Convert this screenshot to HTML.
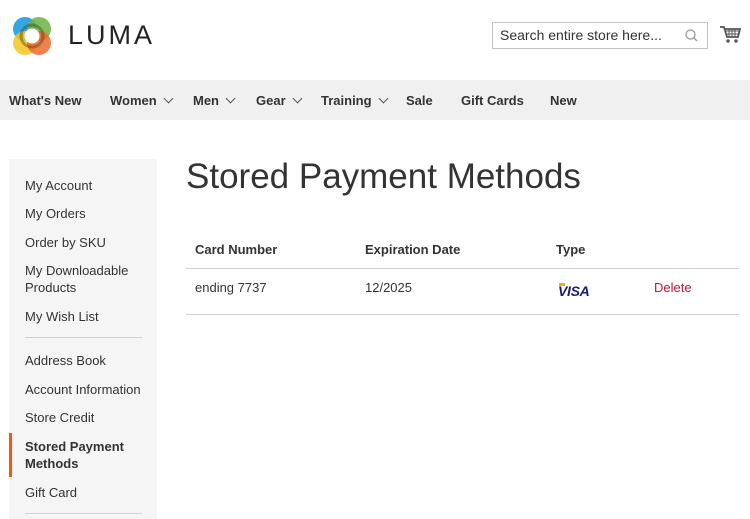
<!DOCTYPE html>
<html><head><style>
*{margin:0;padding:0;box-sizing:border-box}
body{width:750px;height:516px;overflow:hidden;background:#fff;font-family:"Liberation Sans",sans-serif;color:#333;position:relative}
.a{position:absolute;white-space:nowrap}
.nav{position:absolute;top:80px;left:0;width:750px;height:40px;background:#f0f0f0}
.nav span{position:absolute;top:13px;font-size:13px;font-weight:bold;color:#333}
.side{position:absolute;left:9px;top:159px;width:148px;height:360px;background:#f5f5f5}
.side div{position:absolute;left:16px;font-size:13px;color:#333;line-height:17px}
.chev{display:inline-block;width:7px;height:7px;border-right:1.5px solid #555;border-bottom:1.5px solid #555;transform:rotate(45deg);margin-left:8px;position:relative;top:-3px}
</style></head><body>
<svg class="a" style="left:8px;top:12px" width="48" height="48" viewBox="0 0 48 48">
<circle cx="17" cy="17" r="12" fill="#1e9ce0" opacity=".9"/>
<circle cx="31" cy="17" r="12" fill="#6cb33e" opacity=".85"/>
<circle cx="17" cy="31" r="12" fill="#f7c51e" opacity=".85"/>
<circle cx="31" cy="31" r="12" fill="#ef6a2a" opacity=".85"/>
<circle cx="24" cy="24" r="11" fill="none" stroke="#4a3a20" stroke-width="3" opacity=".4"/>
<circle cx="24" cy="24" r="7.5" fill="#fff"/>
</svg>
<div class="a" style="left:68px;top:20px;font-size:27px;letter-spacing:3px;color:#222">LUMA</div>
<div class="a" style="left:492px;top:22px;width:216px;height:27px;border:1px solid #c2c2c2"></div>
<div class="a" style="left:500px;top:27px;font-size:14px;color:#333">Search entire store here...</div>
<svg class="a" style="left:684px;top:28px" width="16" height="16"><circle cx="6.5" cy="6.5" r="4.5" fill="none" stroke="#999" stroke-width="1.3"/><line x1="10" y1="10" x2="13" y2="13" stroke="#999" stroke-width="1.3"/></svg>
<svg class="a" style="left:719px;top:24px" width="22" height="22" viewBox="0 0 22 22"><path d="M1 3h4l3 10h11l2-8H6" fill="none" stroke="#555" stroke-width="1.8"/><path d="M7 7h13M8 10h11M10 5v8M13 5v8M16 5v8" stroke="#555" stroke-width="1"/><circle cx="9" cy="17" r="1.7" fill="#555"/><circle cx="17" cy="17" r="1.7" fill="#555"/></svg>
<div class="nav">
<span style="left:9px">What's New</span>
<span style="left:110px">Women<i class="chev"></i></span>
<span style="left:193px">Men<i class="chev"></i></span>
<span style="left:256px">Gear<i class="chev"></i></span>
<span style="left:321px">Training<i class="chev"></i></span>
<span style="left:406px">Sale</span>
<span style="left:461px">Gift Cards</span>
<span style="left:550px">New</span>
</div>
<div class="side">
<div style="top:18px">My Account</div>
<div style="top:46px">My Orders</div>
<div style="top:75px">Order by SKU</div>
<div style="top:103px">My Downloadable<br>Products</div>
<div style="top:149px">My Wish List</div>
<div style="top:178px;left:16px;width:117px;height:1px;background:#d1d1d1"></div>
<div style="top:193px">Address Book</div>
<div style="top:222px">Account Information</div>
<div style="top:250px">Store Credit</div>
<div style="top:274px;left:0;width:3px;height:44px;background:#ff5501"></div>
<div style="top:279px;font-weight:bold">Stored Payment<br>Methods</div>
<div style="top:325px">Gift Card</div>
<div style="top:354px;left:16px;width:117px;height:1px;background:#d1d1d1"></div>
</div>
<div class="a" style="left:186px;top:157px;font-size:35px;font-weight:300;color:#333">Stored Payment Methods</div>
<div class="a" style="left:195px;top:242px;font-size:13px;font-weight:bold">Card Number</div>
<div class="a" style="left:365px;top:242px;font-size:13px;font-weight:bold">Expiration Date</div>
<div class="a" style="left:556px;top:242px;font-size:13px;font-weight:bold">Type</div>
<div class="a" style="left:186px;top:268px;width:553px;height:1px;background:#d1d1d1"></div>
<div class="a" style="left:195px;top:280px;font-size:13px">ending 7737</div>
<div class="a" style="left:365px;top:280px;font-size:13px">12/2025</div>
<div class="a" style="left:558px;top:283px;font-size:14px;font-weight:bold;font-style:italic;color:#1a1f71;letter-spacing:-.3px">VISA</div>
<div class="a" style="left:559px;top:283px;width:6px;height:3px;background:#f7a823"></div>
<div class="a" style="left:654px;top:280px;font-size:13px;color:#c0133a">Delete</div>
<div class="a" style="left:186px;top:314px;width:553px;height:1px;background:#d1d1d1"></div>
</body></html>
